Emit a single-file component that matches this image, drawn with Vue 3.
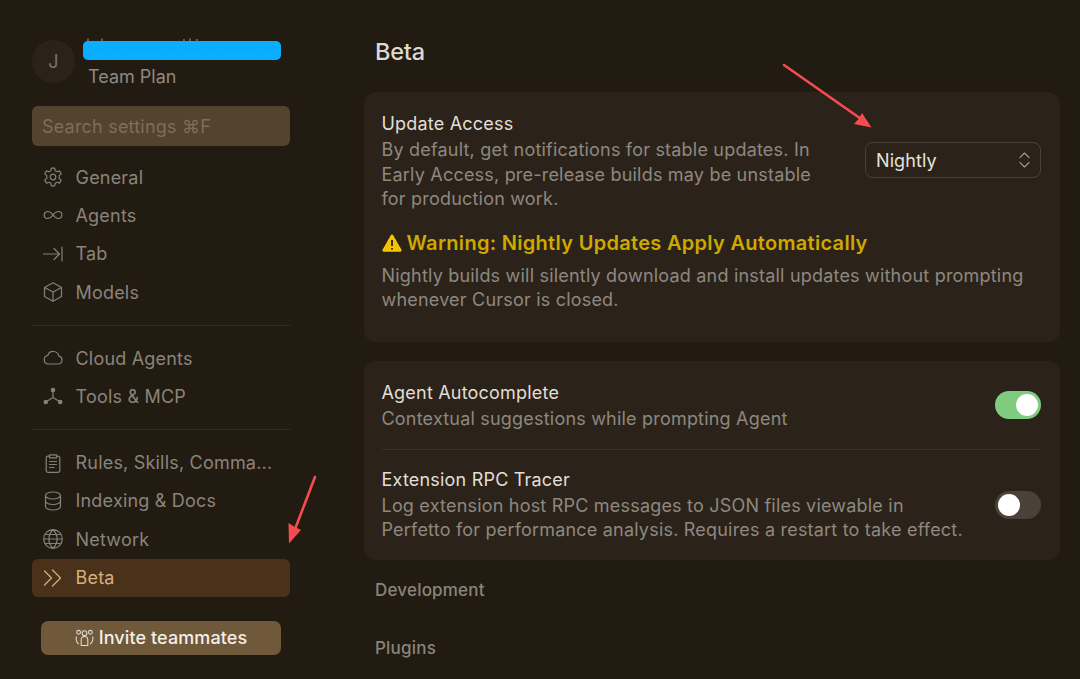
<script setup>
const groupA = [
  { label: 'General', icon: 'gear' },
  { label: 'Agents', icon: 'infinity' },
  { label: 'Tab', icon: 'tab' },
  { label: 'Models', icon: 'cube' },
]
const groupB = [
  { label: 'Cloud Agents', icon: 'cloud' },
  { label: 'Tools & MCP', icon: 'tools' },
]
const groupC = [
  { label: 'Rules, Skills, Comma...', icon: 'clip' },
  { label: 'Indexing & Docs', icon: 'db' },
  { label: 'Network', icon: 'globe' },
  { label: 'Beta', icon: 'beta', active: true },
]
const paths = {
  gear: 'M8.300 1.200h3.400l.5 2.600 1.800 1 2.500-.9 1.700 3-2 1.700v2.800l2 1.700-1.700 3-2.500-.9-1.800 1-.5 2.600H8.300l-.5-2.600-1.800-1-2.500.9-1.700-3 2-1.700V8.600l-2-1.700 1.700-3 2.500.9 1.800-1zM10 7.200a2.800 2.800 0 1 0 0 5.600 2.800 2.800 0 0 0 0-5.600z',
  infinity: 'M10 10C8.200 7.600 6.700 6.500 4.700 6.500a3.500 3.500 0 0 0 0 7c2 0 3.500-1.100 5.300-3.500zm0 0c1.800-2.400 3.300-3.500 5.300-3.500a3.500 3.500 0 0 1 0 7c-2 0-3.500-1.100-5.300-3.500z',
  tab: 'M.5 10h16M11 4.500l5.500 5.500-5.500 5.500M19 3v14',
  cube: 'M10 .8 18.500 5.500v9L10 19.200 1.500 14.500v-9zM1.500 5.500 10 10l8.500-4.500M10 10v9.200',
  cloud: 'M5.200 16h9.800a4 4 0 0 0 .9-7.900 5.800 5.800 0 0 0-11.200-.6A4.300 4.300 0 0 0 5.200 16z',
  clip: 'M6.500 3.200H5A1.800 1.800 0 0 0 3.200 5v12.500A1.800 1.800 0 0 0 5 19.300h10a1.800 1.800 0 0 0 1.800-1.800V5A1.800 1.800 0 0 0 15 3.200h-1.500M6.500 1.800h7v3h-7zM6.500 8.500h7M6.500 11.500h7M6.500 14.500h4.500',
  db: 'M2.500 4.500c0-2 3.400-3.500 7.500-3.500s7.500 1.500 7.500 3.500S14.100 8 10 8 2.500 6.500 2.500 4.500zM2.500 4.500v11c0 2 3.400 3.500 7.500 3.500s7.500-1.500 7.500-3.500v-11M2.500 10c0 2 3.400 3.500 7.500 3.500s7.500-1.500 7.500-3.500',
  globe: 'M10 .7a9.300 9.300 0 1 0 0 18.600A9.300 9.300 0 0 0 10 .7zM.7 10h18.600M2.200 5.500h15.600M2.200 14.500h15.600M10 .7c-5.500 5.300-5.500 13.300 0 18.600M10 .7c5.500 5.300 5.500 13.300 0 18.600',
  beta: 'M1.500 3 8.500 10l-7 7M9.500 2l8 8-8 8',
}
</script>

<template>
  <div class="page">
    <aside class="side">
      <div class="user">
        <div class="avatar">J</div>
        <div class="who">
          <div class="redact"><span class="scribble"></span></div>
          <div class="plan">Team Plan</div>
        </div>
      </div>
      <div class="search">Search settings ⌘F</div>

      <nav class="group first">
        <div v-for="it in groupA" :key="it.label" class="item">
          <svg class="ic" viewBox="0 0 20 20"><path :d="paths[it.icon]" /></svg>
          <span>{{ it.label }}</span>
        </div>
      </nav>
      <div class="rule"></div>
      <nav class="group">
        <div v-for="it in groupB" :key="it.label" class="item">
          <svg v-if="it.icon === 'tools'" class="ic" viewBox="0 0 20 20">
            <path d="M10 4v6.500M10 10.500l-6.500 4M10 10.500l6.500 4" />
            <circle class="dot" cx="10" cy="3" r="2.300" />
            <circle class="dot" cx="2.800" cy="15" r="2.300" />
            <circle class="dot" cx="17.200" cy="15" r="2.300" />
          </svg>
          <svg v-else class="ic" viewBox="0 0 20 20"><path :d="paths[it.icon]" /></svg>
          <span>{{ it.label }}</span>
        </div>
      </nav>
      <div class="rule"></div>
      <nav class="group">
        <div v-for="it in groupC" :key="it.label" class="item" :class="{ active: it.active }">
          <svg class="ic" viewBox="0 0 20 20"><path :d="paths[it.icon]" /></svg>
          <span>{{ it.label }}</span>
        </div>
      </nav>

      <button class="invite">
        <svg class="inv-ic" viewBox="0 0 20 20">
          <circle cx="10" cy="5.500" r="2.500" />
          <path d="M6.500 18.500v-6a3.500 3.500 0 0 1 7 0v6z" />
          <circle cx="3.800" cy="4.500" r="2" />
          <circle cx="16.200" cy="4.500" r="2" />
          <path d="M4 17C1.300 15 .7 11 1.500 9M16 17c2.700-2 3.300-6 2.500-8" />
        </svg>
        Invite teammates
      </button>
    </aside>

    <main class="main">
      <h1 class="title">Beta</h1>

      <section class="card update">
        <div class="update-top">
          <div class="update-text">
            <div class="name">Update Access</div>
            <p class="desc">By default, get notifications for stable updates. In Early Access, pre-release builds may be unstable for production work.</p>
          </div>
          <div class="select">
            <span>Nightly</span>
            <svg class="updown" viewBox="0 0 14 20"><path d="M2 7.500 7 2.500l5 5M2 12.500l5 5 5-5" /></svg>
          </div>
        </div>
        <div class="warn">
          <svg class="warn-ic" viewBox="0 0 20 18">
            <path class="tri" d="M10 .5c.5 0 .9.300 1.200.8l8.300 14.500c.5 1-.1 1.900-1.200 1.900H1.700C.6 17.700 0 16.800.5 15.800L8.800 1.300C9.100.8 9.500.5 10 .5z" />
            <path class="bang" d="M10 6v6M10 14v1.500" />
          </svg>
          <span>Warning: Nightly Updates Apply Automatically</span>
        </div>
        <p class="desc warn-desc">Nightly builds will silently download and install updates without prompting whenever Cursor is closed.</p>
      </section>

      <section class="card toggles">
        <div class="row row-a">
          <div class="row-text">
            <div class="name">Agent Autocomplete</div>
            <p class="desc">Contextual suggestions while prompting Agent</p>
          </div>
          <div class="switch on"><i></i></div>
        </div>
        <div class="row row-b">
          <div class="row-text">
            <div class="name">Extension RPC Tracer</div>
            <p class="desc">Log extension host RPC messages to JSON files viewable in Perfetto for performance analysis. Requires a restart to take effect.</p>
          </div>
          <div class="switch"><i></i></div>
        </div>
      </section>

      <h2 class="sub dev">Development</h2>
      <h2 class="sub plug">Plugins</h2>
    </main>

    <svg class="arrows" viewBox="0 0 1080 679">
      <g fill="none" stroke="#8f8980" stroke-width="1.200">
        <path d="M88 38.500v2.500M102 38.500v2.500M184 39v2M190 38.500v2.500M197 39v2" />
      </g>
      <g fill="none" stroke="#f74b52" stroke-width="2.600" stroke-linecap="round">
        <path d="M784 65 864 121" />
        <path d="M315 477 292 537" />
      </g>
      <path d="M871.500 127.500 854 124 858.500 119 862 113z" fill="#f74b52" />
      <path d="M289 543.500 288.500 523 294 526.500 301 530z" fill="#f74b52" />
    </svg>
  </div>
</template>

<style>
html, body { margin: 0; background: #221b12; }
</style>

<style scoped>
.page {
  position: relative;
  width: 1080px;
  height: 679px;
  overflow: hidden;
  display: flex;
  background: #221b12;
  font-family: Inter, "Noto Sans", sans-serif;
  color: #8d877e;
}
.side {
  width: 258px;
  margin-left: 32px;
  padding-top: 40px;
  flex: none;
  display: flex;
  flex-direction: column;
}
.user { display: flex; gap: 8px; height: 43px; }
.avatar {
  width: 43px; height: 43px; border-radius: 50%;
  background: #2b2319;
  display: flex; align-items: center; justify-content: center;
  font-size: 18px; color: #7b746a;
}
.who { display: block; margin-top: 1px; }
.redact {
  width: 198px; height: 19px; border-radius: 5px;
  background: #0aaeff;
  display: flex; align-items: center; justify-content: center;
}
.scribble { width: 180px; height: 1px; border-top: 1px dashed #3f93c4; margin-top: -2px; }
.plan { margin: 5.500px 0 0 5px; font-size: 18px; line-height: 21px; color: #8f8980; letter-spacing: 0; }
.search {
  margin-top: 23px;
  height: 40px; border-radius: 6px;
  background: #54432f;
  padding-left: 10px;
  display: flex; align-items: center;
  font-size: 18px; color: #7d6e5d;
  letter-spacing: 0.200px;
}
.group { display: flex; flex-direction: column; gap: 0.400px; }
.group.first { margin-top: 12px; }
.item {
  height: 38px;
  padding-left: 11px;
  display: flex; align-items: center; gap: 12.500px;
  font-size: 18px;
  letter-spacing: 0.200px;
  border-radius: 6px;
  color: #8a847b;
}
.ic {
  width: 20px; height: 20px; flex: none;
  fill: none; stroke: #85807a; stroke-width: 1.200;
  stroke-linecap: round; stroke-linejoin: round;
}
.dot { fill: #85807a; stroke: none; }
.item.active { background: #4a3119; color: #d5b07e; }
.item.active .ic { stroke: #d5b07e; }
.rule { height: 1px; background: #332b21; margin: 13.500px 0 13.500px; }
.invite {
  margin: 24px 9px 0;
  height: 34px;
  border: none; border-radius: 7px;
  background: #70583b;
  color: #f4efe8;
  font: 500 18px Inter, "Noto Sans", sans-serif;
  letter-spacing: 0.100px;
  display: flex; align-items: center; justify-content: center; gap: 5px;
  padding: 0;
}
.inv-ic { width: 19px; height: 19px; fill: none; stroke: #e4dcd0; stroke-width: 1.100; }
.main {
  margin-left: 74px;
  width: 696px;
  display: flex;
  flex-direction: column;
}
.title {
  margin: 37px 0 0 11px;
  font-size: 23.500px; line-height: 30px; font-weight: 500;
  color: #ddd9d3;
  letter-spacing: -0.200px;
}
.card { background: #2b2319; border-radius: 12px; }
.update { margin-top: 25px; height: 250px; padding: 20px 19px 0 17.500px; box-sizing: border-box; }
.update-top { display: flex; justify-content: space-between; }
.update-text { width: 445px; }
.name { font-size: 18px; line-height: 24px; color: #e2ded8; letter-spacing: 0.200px; }
.desc {
  margin: 2px 0 0;
  font-size: 18px; line-height: 24.500px;
  color: #8e8880;
  letter-spacing: 0.200px;
}
.select {
  width: 176px; height: 36px; box-sizing: border-box;
  margin-top: 30px;
  border: 1px solid #4a4238; border-radius: 8px;
  display: flex; align-items: center; justify-content: space-between;
  padding: 0 9px 0 10px;
  font-size: 18px; color: #e6e2dc;
  letter-spacing: 0.100px;
}
.updown { width: 13px; height: 20px; fill: none; stroke: #a09a91; stroke-width: 1.300; stroke-linecap: round; stroke-linejoin: round; }
.warn {
  margin-top: 18.500px;
  display: flex; align-items: center; gap: 5px;
  font-size: 20px; line-height: 26px; font-weight: 600;
  color: #cfa800;
  letter-spacing: 0.300px;
}
.warn-ic { width: 20px; height: 18px; flex: none; }
.tri { fill: #f5c400; }
.bang { fill: none; stroke: #3a2e10; stroke-width: 2; }
.warn-desc { margin-top: 7.500px; }
.toggles { margin-top: 19px; height: 199px; padding: 0 19px 0 17.500px; box-sizing: border-box; }
.row { display: flex; justify-content: space-between; }
.row-a { height: 89px; padding-top: 19.500px; box-sizing: border-box; border-bottom: 1px solid #3a3227; }
.row-b { padding-top: 17.500px; }
.row-text { width: 592px; flex: none; }
.switch {
  width: 46px; height: 28px; border-radius: 14px;
  background: #4a4238;
  position: relative; flex: none;
  margin-top: 10.500px;
}
.row-b .switch { margin-top: 23px; }
.switch i {
  position: absolute; top: 3px; left: 3px;
  width: 22px; height: 22px; border-radius: 50%;
  background: #fff;
}
.switch.on { background: #7fcb7f; }
.switch.on i { left: 21px; }
.sub {
  margin: 0 0 0 11px;
  font-size: 17px; line-height: 20px; font-weight: 500;
  color: #8a847b;
  letter-spacing: 0.200px;
}
.dev { margin-top: 20px; }
.plug { margin-top: 38px; }
.arrows { position: absolute; left: 0; top: 0; width: 1080px; height: 679px; pointer-events: none; }
</style>
